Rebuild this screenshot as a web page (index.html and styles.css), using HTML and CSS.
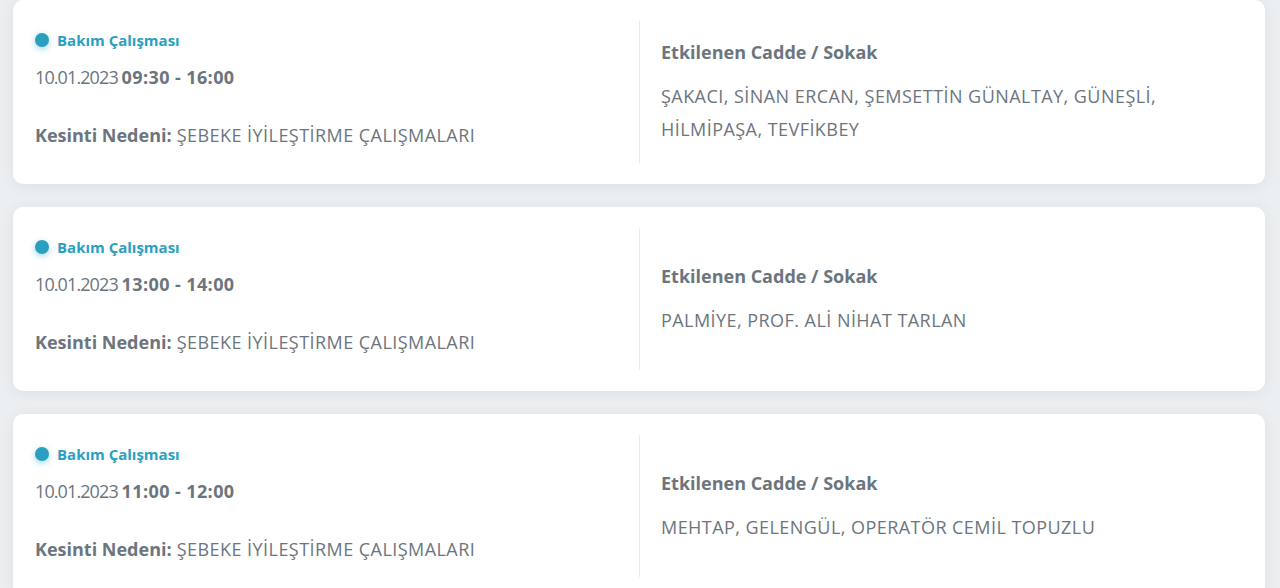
FILE: index.html
```html
<!DOCTYPE html>
<html lang="tr">
<head>
<meta charset="utf-8">
<title>Kesintiler</title>
<link rel="stylesheet" href="styles.css">
</head>
<body>
<main class="list">
  <article class="card">
    <div class="info">
      <div class="status"><span class="dot"></span>Bakım Çalışması</div>
      <div class="date">10.01.2023 <b>09:30 - 16:00</b></div>
      <div class="reason"><b>Kesinti Nedeni:</b> ŞEBEKE İYİLEŞTİRME ÇALIŞMALARI</div>
    </div>
    <div class="streets">
      <div class="streets-title">Etkilenen Cadde / Sokak</div>
      <div class="streets-list">ŞAKACI, SİNAN ERCAN, ŞEMSETTİN GÜNALTAY, GÜNEŞLİ, HİLMİPAŞA, TEVFİKBEY</div>
    </div>
  </article>
  <article class="card">
    <div class="info">
      <div class="status"><span class="dot"></span>Bakım Çalışması</div>
      <div class="date">10.01.2023 <b>13:00 - 14:00</b></div>
      <div class="reason"><b>Kesinti Nedeni:</b> ŞEBEKE İYİLEŞTİRME ÇALIŞMALARI</div>
    </div>
    <div class="streets">
      <div class="streets-title">Etkilenen Cadde / Sokak</div>
      <div class="streets-list">PALMİYE, PROF. ALİ NİHAT TARLAN</div>
    </div>
  </article>
  <article class="card">
    <div class="info">
      <div class="status"><span class="dot"></span>Bakım Çalışması</div>
      <div class="date">10.01.2023 <b>11:00 - 12:00</b></div>
      <div class="reason"><b>Kesinti Nedeni:</b> ŞEBEKE İYİLEŞTİRME ÇALIŞMALARI</div>
    </div>
    <div class="streets">
      <div class="streets-title">Etkilenen Cadde / Sokak</div>
      <div class="streets-list">MEHTAP, GELENGÜL, OPERATÖR CEMİL TOPUZLU</div>
    </div>
  </article>
</main>
</body>
</html>
```
FILE: styles.css
```css
html, body {
  margin: 0;
  padding: 0;
  background: #eceff1;
}
body {
  font-family: "Open Sans", "Noto Sans", sans-serif;
  color: #6c757d;
}
.list {
  display: flex;
  flex-direction: column;
  gap: 23px;
  padding: 0 15px 0 13px;
}
.card {
  background: #ffffff;
  border-radius: 10px;
  box-shadow: 0 2px 14px rgba(60, 70, 80, 0.08);
  padding: 21px 22px;
  display: grid;
  grid-template-columns: 1fr 1fr;
  height: 142px;
}
.info {
  display: flex;
  flex-direction: column;
}
.status {
  display: flex;
  align-items: center;
  gap: 8px;
  margin-top: 8px;
  height: 22px;
  font-size: 15px;
  font-weight: 700;
  color: #2a9fc0;
}
.dot {
  width: 14px;
  height: 14px;
  flex: none;
  border-radius: 50%;
  background: #2a9fc0;
  box-shadow: 0 2px 6px rgba(42, 159, 192, 0.45);
}
.date {
  margin-top: 12px;
  font-size: 18px;
  line-height: 28px;
  letter-spacing: -0.9px;
  white-space: nowrap;
}
.date b {
  font-weight: 700;
  letter-spacing: 0.4px;
}
.reason {
  margin-top: 30px;
  font-size: 18px;
  line-height: 28px;
  letter-spacing: 0.45px;
  white-space: nowrap;
}
.reason b {
  font-weight: 700;
  letter-spacing: 0;
}
.streets {
  border-left: 1px solid #e9ecef;
  padding-left: 21px;
  display: flex;
  flex-direction: column;
  justify-content: center;
}
.streets-title {
  font-size: 18px;
  line-height: 28px;
  font-weight: 700;
  letter-spacing: 0;
}
.streets-list {
  margin-top: 14px;
  font-size: 18px;
  line-height: 33px;
  letter-spacing: 0.45px;
  max-width: 520px;
}
```
